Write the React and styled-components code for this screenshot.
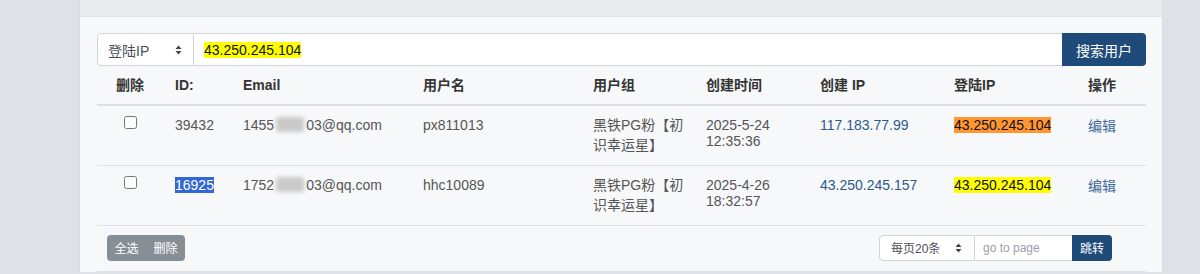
import React from 'react';
import styled, { createGlobalStyle } from 'styled-components';

const GlobalStyle = createGlobalStyle`
  body {
    margin: 0;
    background: #dee2e6;
    font-family: "Liberation Sans", Arial, "Noto Sans CJK SC", sans-serif;
    font-size: 14px;
    color: #555;
  }
`;

const rows = [
  {
    id: '39432',
    emailHead: '1455',
    emailTail: '03@qq.com',
    name: 'px811013',
    group: '黑铁PG粉【初识幸运星】',
    date: '2025-5-24',
    time: '12:35:36',
    createIp: '117.183.77.99',
    loginIp: '43.250.245.104',
    active: true,
  },
  {
    id: '16925',
    emailHead: '1752',
    emailTail: '03@qq.com',
    name: 'hhc10089',
    group: '黑铁PG粉【初识幸运星】',
    date: '2025-4-26',
    time: '18:32:57',
    createIp: '43.250.245.157',
    loginIp: '43.250.245.104',
    selected: true,
  },
];

const cols = [66, 68, 180, 170, 113, 114, 134, 134, 70];

const Arrows = ({ size = 10 }) => (
  <svg width="7" height={size} viewBox="0 0 7 10">
    <path d="M3.5 0.5 L6.5 4 L0.5 4 Z" fill="#444" />
    <path d="M3.5 9.5 L6.5 6 L0.5 6 Z" fill="#444" />
  </svg>
);

const App = () => {
  return (
    <>
      <GlobalStyle />
      <Page>
        <Card>
          <CardHeader />
          <CardBody>
            <SearchBar>
              <SelectBox width={97} height={33}>
                <span>登陆IP</span>
                <Arrows />
              </SelectBox>
              <FakeInput>
                <Hit>43.250.245.104</Hit>
              </FakeInput>
              <PrimaryButton height={33} width={84} size={14}>搜索用户</PrimaryButton>
            </SearchBar>

            <Table>
              <colgroup>
                {cols.map((w, i) => (
                  <col key={i} style={{ width: w }} />
                ))}
              </colgroup>
              <thead>
                <tr>
                  <Th center>删除</Th>
                  <Th>ID:</Th>
                  <Th>Email</Th>
                  <Th>用户名</Th>
                  <Th>用户组</Th>
                  <Th>创建时间</Th>
                  <Th>创建 IP</Th>
                  <Th>登陆IP</Th>
                  <Th>操作</Th>
                </tr>
              </thead>
              <tbody>
                {rows.map((r) => (
                  <Row key={r.id}>
                    <Td center>
                      <Check type="checkbox" />
                    </Td>
                    <Td>{r.selected ? <Selected>{r.id}</Selected> : r.id}</Td>
                    <Td>
                      {r.emailHead}
                      <Blur />
                      {r.emailTail}
                    </Td>
                    <Td>{r.name}</Td>
                    <Td wide>
                      <GroupText>{r.group}</GroupText>
                    </Td>
                    <Td tight>
                      {r.date}
                      <br />
                      {r.time}
                    </Td>
                    <Td>
                      <IpLink>{r.createIp}</IpLink>
                    </Td>
                    <Td>
                      <Hit active={r.active}>{r.loginIp}</Hit>
                    </Td>
                    <Td>
                      <EditLink>编辑</EditLink>
                    </Td>
                  </Row>
                ))}
              </tbody>
            </Table>

            <Footer>
              <GreyGroup>
                <GreyButton>全选</GreyButton>
                <GreyButton>删除</GreyButton>
              </GreyGroup>
              <Pager>
                <SelectBox width={96} height={26} small>
                  <span>每页20条</span>
                  <Arrows />
                </SelectBox>
                <PageInput placeholder="go to page" />
                <PrimaryButton height={26} width={40} size={12}>跳转</PrimaryButton>
              </Pager>
            </Footer>
          </CardBody>
        </Card>
      </Page>
    </>
  );
};
export default App;

const Page = styled.div`
  padding: 0 37px 0 79px;
  height: 274px;
  overflow: hidden;
`;

const Card = styled.div`
  background: #f7f8fa;
  border-left: 1px solid #d8dbdf;
  border-right: 1px solid #d8dbdf;
`;

const CardHeader = styled.div`
  height: 16px;
  background: #e9ebee;
  border-bottom: 1px solid #e1e4e8;
`;

const CardBody = styled.div`
  padding: 16px 16px 0 17px;
`;

const SearchBar = styled.div`
  display: flex;
  height: 33px;
`;

const SelectBox = styled.div`
  box-sizing: border-box;
  width: ${(p) => p.width}px;
  height: ${(p) => p.height}px;
  display: flex;
  align-items: center;
  justify-content: space-between;
  padding: 0 ${(p) => (p.small ? 12 : 11)}px 0 ${(p) => (p.small ? 11 : 10)}px;
  background: #fff;
  border: 1px solid #ced4da;
  border-radius: 4px 0 0 4px;
  color: #495057;
  font-size: ${(p) => (p.small ? 12 : 14)}px;
  flex-shrink: 0;
`;

const FakeInput = styled.div`
  flex: 1;
  box-sizing: border-box;
  height: 33px;
  display: flex;
  align-items: center;
  padding: 0 10px;
  background: #fff;
  border: 1px solid #ced4da;
  border-left: none;
  border-right: none;
  color: #222;
`;

const Hit = styled.span`
  background: ${(p) => (p.active ? '#ff9632' : '#ffff00')};
  color: #111;
`;

const PrimaryButton = styled.button`
  box-sizing: border-box;
  width: ${(p) => p.width}px;
  height: ${(p) => p.height}px;
  padding: 0;
  border: none;
  border-radius: 0 4px 4px 0;
  background: #1f4b7a;
  color: #fff;
  font-family: inherit;
  font-size: ${(p) => p.size}px;
  flex-shrink: 0;
`;

const Table = styled.table`
  width: 1049px;
  table-layout: fixed;
  border-collapse: collapse;
`;

const Th = styled.th`
  padding: 9px 12px;
  line-height: 20px;
  text-align: ${(p) => (p.center ? 'center' : 'left')};
  font-weight: bold;
  color: #333;
  border-bottom: 2px solid #dee2e6;
  white-space: nowrap;
`;

const Row = styled.tr`
  height: 60px;
`;

const Td = styled.td`
  box-sizing: border-box;
  padding: ${(p) => (p.tight ? 11 : 9)}px ${(p) => (p.wide ? 4 : 12)}px 0 12px;
  vertical-align: top;
  text-align: ${(p) => (p.center ? 'center' : 'left')};
  line-height: ${(p) => (p.tight ? '16px' : '20px')};
  border-bottom: 1px solid #dee2e6;
  color: #555;
`;

const GroupText = styled.div`
  height: 40px;
  line-height: 20px;
  overflow: hidden;
`;

const Check = styled.input`
  width: 13px;
  height: 13px;
  margin: 1px 0 0;
  vertical-align: top;
`;

const Selected = styled.span`
  background: #3367d1;
  color: #fff;
`;

const Blur = styled.span`
  display: inline-block;
  width: 28px;
  height: 15px;
  margin: 0 2px;
  vertical-align: -2px;
  background: #c9c9c9;
  border-radius: 3px;
  filter: blur(2px);
`;

const IpLink = styled.span`
  color: #2b5a8a;
`;

const EditLink = styled.a`
  color: #3d6a98;
  text-decoration: none;
  display: inline-block;
  padding-top: 1px;
`;

const Footer = styled.div`
  display: flex;
  justify-content: space-between;
  align-items: center;
  padding: 9px 34px 10px 10px;
  border-bottom: 1px solid #dee2e6;
  width: 1049px;
  box-sizing: border-box;
`;

const GreyGroup = styled.div`
  display: flex;
  height: 26px;
  border-radius: 4px;
  overflow: hidden;
  background: #868e96;
`;

const GreyButton = styled.button`
  border: none;
  background: transparent;
  color: #fff;
  font-family: inherit;
  font-size: 12px;
  padding: 0 7px;
  height: 26px;
  width: 39px;
`;

const Pager = styled.div`
  display: flex;
  align-items: center;
`;

const PageInput = styled.input`
  box-sizing: border-box;
  width: 97px;
  height: 26px;
  border: 1px solid #ced4da;
  border-left: none;
  border-right: none;
  padding: 0 8px;
  font-family: inherit;
  font-size: 12px;
  background: #fff;
  outline: none;
  &::placeholder {
    color: #9aa0a6;
  }
`;
